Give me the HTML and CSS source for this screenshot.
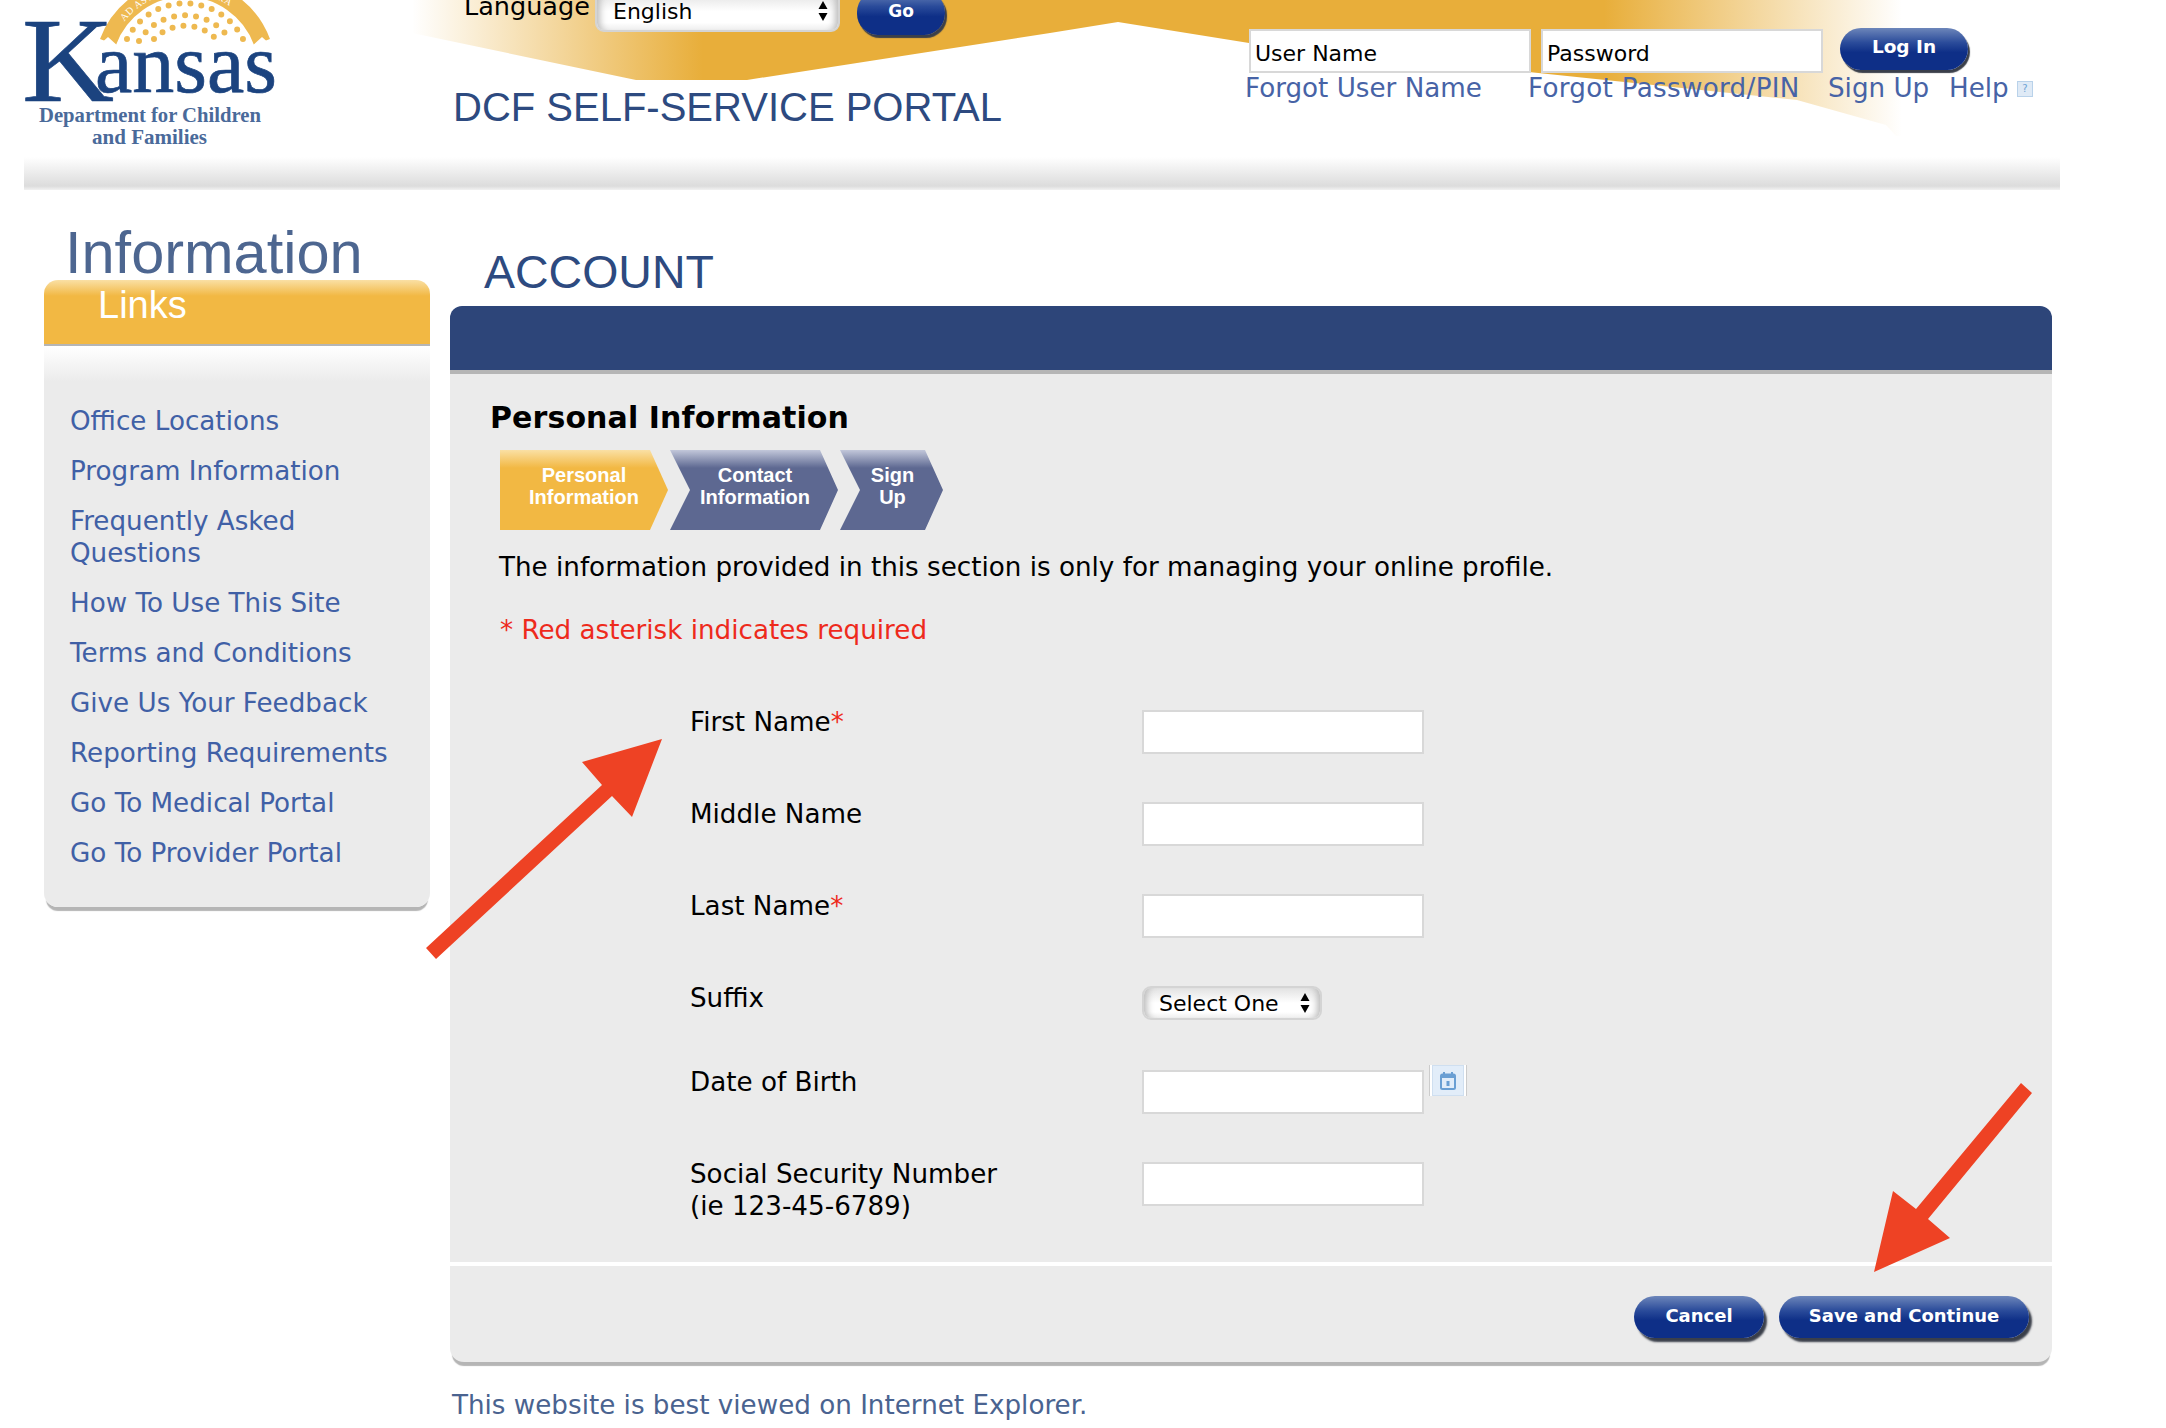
FILE: index.html
```html
<!DOCTYPE html>
<html lang="en">
<head>
  <meta charset="UTF-8" />
  <meta name="viewport" content="width=device-width, initial-scale=1.0" />
  <title>DCF Self-Service Portal</title>
  <link rel="stylesheet" href="styles.css">
</head>
<body>

  <header class="top">
    <!-- gold swoosh behind the header -->
    <svg class="swoosh" width="1490" height="140" viewBox="0 0 1490 140">
      <defs>
        <linearGradient id="swooshFill" x1="0" x2="1" y1="0" y2="0">
          <stop offset="0" stop-color="#e8ae3a" stop-opacity="0" />
          <stop offset="0.195" stop-color="#e8ae3a" />
          <stop offset="0.8" stop-color="#e8ae3a" />
          <stop offset="1" stop-color="#e8ae3a" stop-opacity="0" />
        </linearGradient>
      </defs>
      <path d="M0 0H1490V136H1484L1474 125L1385 100L837 43L706 22L638 33L335 80L224 80L0 33Z" fill="url(#swooshFill)" />
    </svg>

    <a class="logo" href="#">
      <svg width="276" height="157" viewBox="0 0 276 157">
        <path d="M108 42A82 82 0 0 1 262 42" fill="none" stroke="#eeb950" stroke-width="17" />
        <path d="M97 47L119 47L108 37ZM251 47L273 47L262 37Z" fill="#fff" />
        <path id="mottoArc" d="M108 69A77 77 0 0 1 262 69" fill="none" />
        <text class="logo-motto"><textPath href="#mottoArc" startOffset="51">AD ASTRA PER ASPERA</textPath></text>
        <path d="M127 39A65 65 0 0 1 243 39" fill="none" stroke="#eeb950" stroke-width="6" stroke-linecap="round" stroke-dasharray="0 11" />
        <path d="M139 41A54 54 0 0 1 231 41" fill="none" stroke="#eeb950" stroke-width="6" stroke-linecap="round" stroke-dasharray="0 11" />
        <path d="M154 39A43 43 0 0 1 216 39" fill="none" stroke="#eeb950" stroke-width="6" stroke-linecap="round" stroke-dasharray="0 11" />
        <text class="logo-k" x="22" y="101" textLength="92" lengthAdjust="spacingAndGlyphs">K</text>
        <text class="logo-name" x="95" y="92" textLength="182" lengthAdjust="spacingAndGlyphs">ansas</text>
        <text class="logo-sub" x="39" y="122" textLength="222" lengthAdjust="spacingAndGlyphs">Department for Children</text>
        <text class="logo-sub" x="92" y="144" textLength="115" lengthAdjust="spacingAndGlyphs">and Families</text>
      </svg>
    </a>

    <div class="top-mid">
      <div class="lang-row">
        <label class="lang-label">Language</label>
        <span class="pick-wrap lang-pick">
          <select class="pick"><option>English</option></select>
          <svg class="pick-arrows" width="10" height="20" viewBox="0 0 10 20"><path d="M5 0L9.500 8H.5ZM5 20L.5 12H9.500Z" /></svg>
        </span>
        <a class="btn btn-go" href="#">Go</a>
      </div>
      <div class="portal-title">DCF SELF-SERVICE PORTAL</div>
    </div>

    <div class="top-login">
      <div class="login-row">
        <input class="login-input" type="text" value="User Name">
        <input class="login-input" type="text" value="Password">
        <a class="btn btn-login" href="#">Log In</a>
      </div>
      <div class="login-links">
        <a class="link-user" href="#">Forgot User Name</a>
        <a class="link-pass" href="#">Forgot Password/PIN</a>
        <a class="link-sign" href="#">Sign Up</a>
        <a class="link-help" href="#">Help</a>
        <span class="help-icon">?</span>
      </div>
    </div>
  </header>
  <div class="top-rule"></div>

  <div class="columns">
    <aside class="side">
      <div class="side-title">Information</div>
      <div class="side-head">Links</div>
      <ul class="side-links">
        <li><a href="#">Office Locations</a></li>
        <li><a href="#">Program Information</a></li>
        <li><a href="#">Frequently Asked Questions</a></li>
        <li><a href="#">How To Use This Site</a></li>
        <li><a href="#">Terms and Conditions</a></li>
        <li><a href="#">Give Us Your Feedback</a></li>
        <li><a href="#">Reporting Requirements</a></li>
        <li><a href="#">Go To Medical Portal</a></li>
        <li><a href="#">Go To Provider Portal</a></li>
      </ul>
    </aside>

    <main class="main">
      <h1 class="page-title">ACCOUNT</h1>
      <div class="main-bar"></div>
      <section class="main-body">
        <h2 class="section-title">Personal Information</h2>
        <div class="steps">
          <div class="step step-on">Personal<br>Information</div>
          <div class="step step-next">Contact<br>Information</div>
          <div class="step step-next step-last">Sign<br>Up</div>
        </div>
        <p class="intro">The information provided in this section is only for managing your online profile.</p>
        <p class="required-note">* Red asterisk indicates required</p>

        <div class="form">
          <label class="field-label">First Name<span class="star">*</span></label>
          <div class="field"><input class="text-input" type="text"></div>

          <label class="field-label">Middle Name</label>
          <div class="field"><input class="text-input" type="text"></div>

          <label class="field-label">Last Name<span class="star">*</span></label>
          <div class="field"><input class="text-input" type="text"></div>

          <label class="field-label">Suffix</label>
          <div class="field">
            <span class="pick-wrap suffix-pick">
              <select class="pick"><option>Select One</option></select>
              <svg class="pick-arrows" width="10" height="20" viewBox="0 0 10 20"><path d="M5 0L9.500 8H.5ZM5 20L.5 12H9.500Z" /></svg>
            </span>
          </div>

          <label class="field-label">Date of Birth</label>
          <div class="field">
            <input class="text-input" type="text">
            <a class="cal-btn" href="#">
              <svg width="16" height="19" viewBox="0 0 16 19">
                <path d="M1 5Q1 3.500 2.500 3.500H13.500Q15 3.500 15 5V16.500Q15 18 13.500 18H2.500Q1 18 1 16.500Z" fill="none" stroke="#6a9fd3" stroke-width="2" />
                <path d="M1 3.500H15V7H1ZM3 1H5V4H3ZM11 1H13V4H11ZM6.500 10H9.500V15H6.500Z" fill="#6a9fd3" />
              </svg>
            </a>
          </div>

          <label class="field-label">Social Security Number<br>(ie 123-45-6789)</label>
          <div class="field"><input class="text-input" type="text"></div>
        </div>
      </section>
      <div class="main-foot">
        <a class="btn btn-foot btn-cancel" href="#">Cancel</a>
        <a class="btn btn-foot btn-save" href="#">Save and Continue</a>
      </div>
      <p class="browser-note">This website is best viewed on Internet Explorer.</p>
    </main>
  </div>

  <!-- red annotation arrows drawn on top of the page -->
  <svg class="notes" width="2166" height="1428" viewBox="0 0 2166 1428">
    <polygon points="426,948 602,785 582,762 662,739 632,817 612,796 436,959" />
    <polygon points="2021,1083 2032,1093 1928,1219 1950,1238 1874,1272 1893,1191 1916,1209" />
  </svg>

</body>
</html>
```

FILE: styles.css
```css
html, body {
  margin: 0;
  padding: 0;
  background: #fff;
  overflow-x: hidden;
}
body {
  position: relative;
  width: 2166px;
  height: 1428px;
  overflow: hidden;
  font-family: "DejaVu Sans", Verdana, sans-serif;
  font-size: 26.200px;
  color: #000;
}
a {
  text-decoration: none;
}

/* header */
.top {
  position: relative;
  display: flex;
  height: 157px;
  overflow: hidden;
}
.swoosh {
  position: absolute;
  top: 0;
  left: 412px;
}
.logo {
  position: relative;
  display: block;
  width: 453px;
  flex: none;
}
.logo svg {
  display: block;
}
.logo-motto {
  font-family: "Liberation Serif", serif;
  font-size: 10px;
  letter-spacing: 0.4px;
  fill: #fff;
}
.logo-k, .logo-name {
  font-family: "Liberation Serif", serif;
  fill: #1b437f;
  stroke: #1b437f;
  stroke-width: 0.7px;
}
.logo-k {
  font-size: 120px;
}
.logo-name {
  font-size: 85px;
}
.logo-sub {
  font-family: "Liberation Serif", serif;
  font-weight: bold;
  font-size: 22px;
  fill: #4a6a9a;
}
.top-mid {
  position: relative;
  width: 792px;
  flex: none;
}
.lang-row {
  display: flex;
  align-items: center;
  height: 44px;
  margin: -11px 0 0 11px;
}
.lang-label {
  font-size: 25.500px;
  width: 131px;
  margin-top: -10px;
}
.portal-title {
  margin-top: 50px;
  font-family: "Liberation Sans", Arial, sans-serif;
  font-size: 40px;
  line-height: 48px;
  color: #2d4a80;
}
.pick-wrap {
  position: relative;
  display: inline-block;
}
.pick {
  display: block;
  box-sizing: border-box;
  width: 100%;
  height: 100%;
  appearance: none;
  border: 2px solid #d4d4d4;
  border-radius: 9px;
  background: linear-gradient(#e2e2e2, #fff 50%, #fff 80%, #eee);
  box-shadow: inset 10px 0 7px -7px #bbb, inset -10px 0 7px -7px #bbb;
  font-family: inherit;
  color: #000;
}
.pick-arrows {
  position: absolute;
  top: 50%;
  right: 12px;
  margin-top: -10px;
}
.lang-pick {
  width: 245px;
  height: 41px;
}
.lang-pick .pick {
  padding: 0 16px;
  font-size: 22px;
}
.suffix-pick {
  width: 180px;
  height: 34px;
}
.suffix-pick .pick {
  padding: 0 15px;
  font-size: 22px;
}

/* blue pill buttons */
.btn {
  display: flex;
  align-items: center;
  justify-content: center;
  box-sizing: border-box;
  height: 42px;
  padding-bottom: 4px;
  border-radius: 21px;
  background: linear-gradient(#6d86ba, #2a4b9a 35%, #0e2f87 58%);
  box-shadow: 2px 3px 1px #3a3f4a;
  font-weight: bold;
  font-size: 17px;
  color: #fff;
}
.btn-go {
  width: 88px;
  height: 44px;
  margin-left: 17px;
  margin-top: 4px;
}
.top-login {
  position: relative;
  width: 800px;
  flex: none;
}
.login-row {
  display: flex;
  align-items: center;
  height: 44px;
  margin: 29px 0 0 4px;
}
.login-input {
  box-sizing: border-box;
  width: 282px;
  height: 44px;
  margin-right: 10px;
  padding: 4px 4px 0;
  border: 2px solid #d8d8d8;
  background: #fff;
  font-family: inherit;
  font-size: 22px;
  color: #000;
}
.btn-login {
  width: 128px;
  margin: -5px 0 0 7px;
  font-size: 18.500px;
}
.login-links {
  display: flex;
  align-items: center;
  height: 30px;
}
.login-links a {
  color: #4763a6;
  white-space: nowrap;
}
.link-user { width: 283px; }
.link-pass {
  width: 300px;
  letter-spacing: 0.3px;
}
.link-sign { width: 121px; }
.link-help { width: 68px; }
.help-icon {
  display: block;
  width: 14px;
  height: 14px;
  margin-top: 2px;
  border: 1px solid #b9d2ea;
  background: #dfeaf6;
  font-size: 10px;
  line-height: 14px;
  text-align: center;
  color: #6fa3d4;
}
.top-rule {
  height: 33px;
  margin: 0 106px 0 24px;
  background: linear-gradient(#fff, #e9e9e9 55%, #dcdcdc 88%, #f2f2f2);
}

/* two columns below header */
.columns {
  display: flex;
  padding: 0 114px 0 44px;
  gap: 20px;
}
.side {
  width: 386px;
  flex: none;
}
.side-title {
  box-sizing: border-box;
  height: 90px;
  padding: 27px 0 0 21px;
  font-family: "Liberation Sans", Arial, sans-serif;
  font-size: 59.500px;
  line-height: 72px;
  color: #4d6690;
}
.side-head {
  box-sizing: border-box;
  height: 66px;
  padding-left: 54px;
  border-bottom: 2px solid #b5b5b5;
  border-radius: 14px 14px 0 0;
  background: linear-gradient(#fae0a4, #f2b843 16px);
  font-family: "Liberation Sans", Arial, sans-serif;
  font-size: 38px;
  line-height: 50px;
  color: #fff;
}
.side-links {
  margin: 0;
  padding: 59px 24px 38px 26px;
  list-style: none;
  border-radius: 0 0 14px 14px;
  background: linear-gradient(#fff, #ebebeb 36px);
  box-shadow: 0 6px 1px -2px #b5b5b5;
  line-height: 32px;
}
.side-links li {
  margin-bottom: 18px;
}
.side-links li:last-child {
  margin-bottom: 0;
}
.side-links a {
  color: #4060a6;
}

/* main panel */
.main {
  flex: 1;
  min-width: 0;
}
.page-title {
  box-sizing: border-box;
  height: 116px;
  margin: 0;
  padding: 54px 0 0 34px;
  font-family: "Liberation Sans", Arial, sans-serif;
  font-weight: normal;
  font-size: 46.500px;
  line-height: 56px;
  color: #2d4a80;
}
.main-bar {
  height: 64px;
  border-bottom: 4px solid #b5b5b5;
  border-radius: 12px 12px 0 0;
  background: #2d4579;
}
.main-body {
  box-sizing: border-box;
  height: 892px;
  padding: 26px 0 0 40px;
  border-bottom: 4px solid #fff;
  background: #ebebeb;
}
.section-title {
  margin: 0;
  font-size: 30px;
  line-height: 36px;
  font-weight: bold;
  letter-spacing: 0.1px;
}
.steps {
  display: flex;
  margin: 14px 0 0 10px;
}
.step {
  box-sizing: border-box;
  width: 168px;
  height: 80px;
  margin-right: -18px;
  padding-top: 14px;
  font-family: "Liberation Sans", Arial, sans-serif;
  font-weight: bold;
  font-size: 20px;
  line-height: 22px;
  text-align: center;
  color: #fff;
  background: linear-gradient(#c2c7da, #5d6891 18px);
  clip-path: polygon(0 0, calc(100% - 18px) 0, 100% 50%, calc(100% - 18px) 100%, 0 100%, 20px 50%);
}
.step-on {
  background: linear-gradient(#fae0a4, #f2b843 18px);
  clip-path: polygon(0 0, calc(100% - 18px) 0, 100% 50%, calc(100% - 18px) 100%, 0 100%);
}
.step-next {
  margin-left: 20px;
  padding-left: 20px;
  padding-right: 18px;
}
.step-last {
  width: 103px;
}
.intro {
  margin: 20px 0 0 9px;
  line-height: 34px;
}
.required-note {
  margin: 29px 0 0 10px;
  line-height: 34px;
  color: #ee2a1c;
}

/* form rows */
.form {
  display: grid;
  grid-template-columns: 452px 1fr;
  grid-template-rows: 92px 92px 92px 84px 92px 92px;
  margin: 59px 0 0 200px;
}
.field-label {
  line-height: 32px;
}
.star {
  color: #ee2a1c;
}
.field {
  display: flex;
  align-items: flex-start;
  padding-top: 4px;
}
.text-input {
  box-sizing: border-box;
  width: 282px;
  height: 44px;
  border: 2px solid #d8d8d8;
  background: #fff;
}
.cal-btn {
  display: flex;
  align-items: center;
  justify-content: center;
  box-sizing: border-box;
  width: 32px;
  height: 31px;
  margin: -5px 0 0 8px;
  border: 1px solid #cfdff0;
  background: #e2edf9;
  box-shadow: -2px 0 0 #fff, 2px 0 0 #fff, -3px 0 0 #ccc, 3px 0 0 #ccc;
}
.main-foot {
  display: flex;
  justify-content: flex-end;
  gap: 15px;
  box-sizing: border-box;
  height: 96px;
  padding: 30px 23px 0 0;
  border-radius: 0 0 14px 14px;
  background: #ebebeb;
  box-shadow: 0 6px 1px -2px #b5b5b5;
}
.btn-foot {
  font-size: 18px;
  box-shadow: 3px 4px 2px #3a3f4a;
}
.btn-cancel { width: 130px; }
.btn-save { width: 250px; }
.browser-note {
  margin: 27px 0 0 2px;
  line-height: 32px;
  color: #4a6390;
}

/* arrows */
.notes {
  position: absolute;
  top: 0;
  left: 0;
  pointer-events: none;
}
.notes polygon {
  fill: #ee4224;
}
```
